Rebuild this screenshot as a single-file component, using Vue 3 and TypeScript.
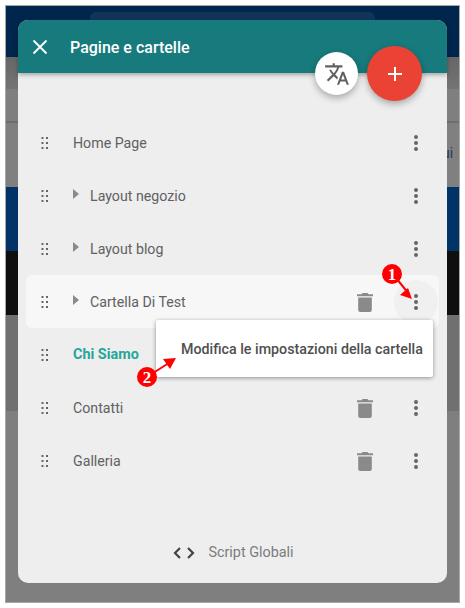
<script setup lang="ts">
interface Row {
  label: string
  folder?: boolean
  active?: boolean
  trash?: boolean
  hover?: boolean
}

const rows: Row[] = [
  { label: 'Home Page' },
  { label: 'Layout negozio', folder: true },
  { label: 'Layout blog', folder: true },
  { label: 'Cartella Di Test', folder: true, trash: true, hover: true },
  { label: 'Chi Siamo', active: true },
  { label: 'Contatti', trash: true },
  { label: 'Galleria', trash: true }
]
</script>

<template>
  <div class="frame">
    <div class="backdrop">
      <div class="bg navy"><div class="bg-search"></div></div>
      <div class="bg grey-a"></div>
      <div class="bg grey-b"><span class="peek">ui <b>:</b></span></div>
      <div class="bg blue"></div>
      <div class="bg black"></div>
      <div class="bg grey-c"></div>
      <div class="bg grey-d"></div>
    </div>

    <div class="dialog">
      <header class="head">
        <svg class="close" viewBox="0 0 16 16" width="16" height="16">
          <path d="M1.5 1.5 14.5 14.5M14.5 1.5 1.5 14.5" stroke="#fff" stroke-width="1.9" fill="none" />
        </svg>
        <span class="title">Pagine e cartelle</span>
      </header>

      <button class="fab-small" type="button" aria-label="Traduci">
        <svg viewBox="0 0 24 24" width="26" height="26">
          <path
            fill="#616161"
            d="M12.87 15.07l-2.54-2.51.03-.03A17.52 17.52 0 0 0 14.07 6H17V4h-7V2H8v2H1v1.99h11.17C11.5 7.92 10.44 9.75 9 11.35 8.07 10.32 7.3 9.19 6.69 8h-2c.73 1.63 1.73 3.17 2.98 4.56l-5.09 5.02L4 19l5-5 3.11 3.11.76-2.04zM18.5 10h-2L12 22h2l1.12-3h4.75L21 22h2l-4.5-12zm-2.62 7l1.62-4.33L19.12 17h-3.24z"
          />
        </svg>
      </button>
      <button class="fab" type="button" aria-label="Aggiungi">
        <svg viewBox="0 0 16 16" width="16" height="16">
          <path d="M8 1v14M1 8h14" stroke="#fff" stroke-width="2" fill="none" />
        </svg>
      </button>

      <ul class="list">
        <li v-for="row in rows" :key="row.label" class="row" :class="{ hover: row.hover }">
          <svg class="grip" viewBox="0 0 10 14" width="10" height="14">
            <g fill="#666">
              <rect x="1.5" y="1" width="2" height="2" />
              <rect x="6" y="1" width="2" height="2" />
              <rect x="1.5" y="6" width="2" height="2" />
              <rect x="6" y="6" width="2" height="2" />
              <rect x="1.5" y="11" width="2" height="2" />
              <rect x="6" y="11" width="2" height="2" />
            </g>
          </svg>
          <span class="name" :class="{ active: row.active }">
            <svg v-if="row.folder" class="caret" viewBox="0 0 6 10" width="6" height="10">
              <path d="M0 0 6 5 0 10z" fill="#8a8a8a" />
            </svg>
            {{ row.label }}
          </span>
          <svg v-if="row.trash" class="trash" viewBox="0 0 16 20" width="16" height="20">
            <path fill="#8a8a8a" d="M5.5 1h5l1 1.2H16v2H0v-2h4.5zM1.2 5.6h13.6V18a2 2 0 0 1-2 2H3.2a2 2 0 0 1-2-2z" />
          </svg>
          <span class="more" :class="{ on: row.hover }">
            <i></i><i></i><i></i>
          </span>
        </li>
      </ul>

      <div class="menu">Modifica le impostazioni della cartella</div>

      <footer class="foot">
        <svg viewBox="0 0 22 12" width="22" height="12">
          <path d="M7 1 2 6l5 5M15 1l5 5-5 5" stroke="#444" stroke-width="2.2" fill="none" />
        </svg>
        <span>Script Globali</span>
      </footer>
    </div>

    <!-- annotation markers drawn over the screenshot -->
    <svg class="marks" viewBox="0 0 465 608" width="465" height="608">
      <path d="M396 278 L409 294" stroke="#f00" stroke-width="2" />
      <path d="M412 299 L408 288 L400 295z" fill="#f00" />
      <path d="M150 375 L172 361" stroke="#f00" stroke-width="2" />
      <path d="M176 358 L163 359 L170 369z" fill="#f00" />
      <circle cx="392" cy="274" r="10" fill="#f00" />
      <circle cx="147" cy="377" r="10" fill="#f00" />
      <text x="392" y="280" class="num">1</text>
      <text x="147" y="383" class="num">2</text>
    </svg>
  </div>
</template>

<style scoped>
.frame {
  position: relative;
  width: 465px;
  height: 608px;
  background: #fff;
  overflow: hidden;
  font-family: Roboto, 'Liberation Sans', sans-serif;
}

.backdrop {
  position: absolute;
  inset: 5px 5px 5px 5px;
  border: 1px solid #a8a8a8;
  display: flex;
  flex-direction: column;
  background: #7f7f7f;
}

.bg {
  flex: none;
}

.navy {
  height: 51px;
  box-sizing: border-box;
  background: #00264d;
  padding: 6px 84px 0;
}

.bg-search {
  height: 20px;
  border-radius: 6px 6px 0 0;
  background: #12345a;
}

.grey-a {
  height: 32px;
  background: linear-gradient(#666, #747474);
}

.grey-b {
  height: 98px;
  background: linear-gradient(#7f7f7f 0, #7f7f7f 32px, #6e6e6e 32px, #6e6e6e 34px, #808080 34px);
  position: relative;
}

.peek {
  position: absolute;
  left: 436px;
  top: 56px;
  font-size: 14px;
  color: #2a3a55;
  white-space: nowrap;
}

.peek b {
  color: #a07a30;
  font-weight: 400;
}

.blue {
  height: 64px;
  background: #003366;
}

.black {
  height: 64px;
  background: #0f0f0f;
}

.grey-c {
  height: 96px;
  background: #707070;
}

.grey-d {
  flex: 1;
  background: #7f7f7f;
}

.dialog {
  position: absolute;
  left: 18px;
  top: 20px;
  width: 429px;
  height: 563px;
  border-radius: 10px;
  background: #eee;
  display: flex;
  flex-direction: column;
}

.head {
  flex: none;
  height: 53px;
  display: flex;
  align-items: center;
  padding: 0 0 0 14px;
  gap: 22px;
  background: #177a7c;
  border-radius: 10px 10px 0 0;
  box-shadow: 0 2px 4px rgba(0, 0, 0, 0.3);
}

.title {
  color: #fff;
  font-size: 16px;
  font-weight: 500;
  position: relative;
  top: 1px;
}

.fab-small,
.fab {
  position: absolute;
  border: none;
  padding: 0;
  border-radius: 50%;
  display: flex;
  align-items: center;
  justify-content: center;
  box-shadow: 0 3px 7px rgba(0, 0, 0, 0.3);
}

.fab-small {
  left: 297px;
  top: 32px;
  width: 43px;
  height: 43px;
  background: #fff;
}

.fab {
  left: 349px;
  top: 26px;
  width: 55px;
  height: 55px;
  background: #ea4335;
}

.list {
  list-style: none;
  margin: 0;
  padding: 43px 8px 0;
}

.row {
  height: 53px;
  display: flex;
  align-items: center;
  padding: 0 0 0 14px;
  border-radius: 6px;
}

.row.hover {
  background: #f7f7f7;
}

.grip {
  flex: none;
}

.name {
  flex: 1;
  display: flex;
  align-items: center;
  margin-left: 23px;
  font-size: 14.2px;
  color: #616161;
}

.name.active {
  color: #26a69a;
  font-weight: 700;
  font-size: 14.4px;
}

.caret {
  margin-right: 11px;
  position: relative;
  top: -2px;
}

.trash {
  flex: none;
  margin-right: 21px;
}

.more {
  flex: none;
  width: 44px;
  height: 44px;
  margin-right: 1px;
  border-radius: 50%;
  display: flex;
  flex-direction: column;
  align-items: center;
  justify-content: center;
  gap: 2px;
}

.more.on {
  background: #f0f0f0;
}

.more i {
  width: 4px;
  height: 4px;
  border-radius: 50%;
  background: #666;
}

.menu {
  position: absolute;
  left: 138px;
  top: 300px;
  width: 277px;
  height: 57px;
  box-sizing: border-box;
  padding: 21px 0 0 25px;
  background: #fff;
  border-radius: 2px;
  box-shadow: 0 1px 4px rgba(0, 0, 0, 0.4);
  font-size: 14.25px;
  font-weight: 500;
  color: #4f4f4f;
  white-space: nowrap;
}

.foot {
  margin-top: auto;
  height: 39px;
  display: flex;
  align-items: flex-start;
  justify-content: center;
  gap: 13px;
  padding-left: 2px;
  font-size: 14.4px;
  color: #7c7c7c;
}

.foot svg {
  margin-top: 3px;
}

.marks {
  position: absolute;
  left: 0;
  top: 0;
  pointer-events: none;
}

.num {
  fill: #fff;
  font-family: 'Liberation Serif', serif;
  font-size: 17px;
  font-weight: 700;
  text-anchor: middle;
}
</style>
